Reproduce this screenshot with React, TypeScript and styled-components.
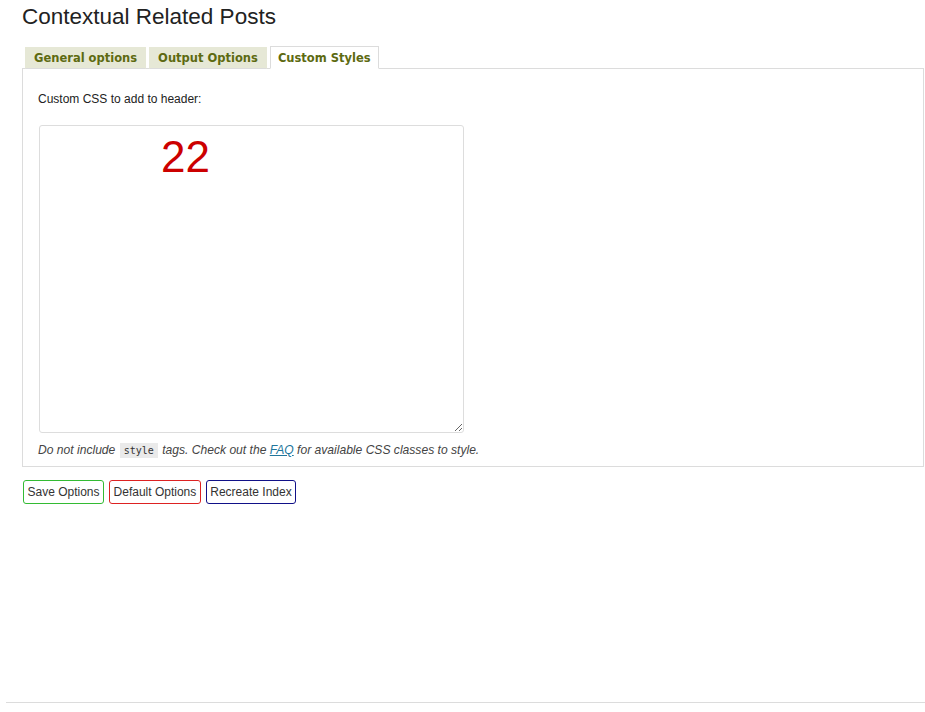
import styled, { createGlobalStyle } from "styled-components"

const GlobalStyle = createGlobalStyle`
    html, body {
        margin: 0;
        padding: 0;
        background: #fff;
    }
    body {
        font-family: "Liberation Sans", Arial, sans-serif;
        font-size: 12px;
        color: #333;
    }
`

const Page = styled.div`
    width: 925px;
    height: 712px;
    display: flex;
    flex-direction: column;
    box-sizing: border-box;
`

const Wrap = styled.div`
    padding: 0 1px 0 22px;
    flex: 1;
`

const Title = styled.h1`
    margin: 0;
    padding: 5px 0 0;
    font-family: "Liberation Sans", Arial, sans-serif;
    font-size: 22.5px;
    font-weight: 400;
    line-height: 24px;
    color: #222;
`

const Tabs = styled.ul`
    list-style: none;
    margin: 18px 0 0 3px;
    padding: 0;
    display: flex;
    gap: 3px;
    position: relative;
    z-index: 1;
`

const Tab = styled.li<{ $active?: boolean }>`
    box-sizing: border-box;
    padding: 0 ${p => (p.$active ? "7px" : "8px")};
    display: flex;
    align-items: center;
    font-family: "DejaVu Sans", Verdana, sans-serif;
    font-weight: 700;
    font-size: 11.5px;
    color: #5d6a11;
    background: ${p => (p.$active ? "#fff" : "#e6e8d6")};
    border: 1px solid ${p => (p.$active ? "#dcdcdc" : "#e6e8d6")};
    border-bottom-color: ${p => (p.$active ? "#fff" : "#dcdcdc")};
    margin-bottom: -1px;
    height: ${p => (p.$active ? "23px" : "22px")};
    margin-top: ${p => (p.$active ? "-1px" : "0")};
`

const Panel = styled.div`
    border: 1px solid #dcdcdc;
    padding: 20px 15px 8px;
    height: 399px;
    box-sizing: border-box;
`

const Label = styled.p`
    margin: 3px 0 0;
    font-size: 12px;
    line-height: 14px;
    color: #222;
`

const FieldBox = styled.div`
    position: relative;
    width: 425px;
    height: 308px;
    margin: 19px 0 0 1px;
`

const CssArea = styled.textarea`
    width: 100%;
    height: 100%;
    box-sizing: border-box;
    border: 1px solid #dddddd;
    border-radius: 3px;
    background: #fff;
    resize: both;
    font-family: "Liberation Mono", monospace;
    font-size: 12px;
    outline: none;
`

const Marker = styled.span`
    position: absolute;
    left: 122px;
    top: 6px;
    font-family: "Liberation Sans", Arial, sans-serif;
    font-size: 44px;
    line-height: 52px;
    color: #cc0000;
    pointer-events: none;
`

const Help = styled.p`
    margin: 8px 0 0;
    font-size: 12.1px;
    line-height: 18px;
    font-style: italic;
    color: #444;
`

const Code = styled.code`
    font-family: "DejaVu Sans Mono", monospace;
    font-size: 10px;
    font-style: normal;
    background: #eaeaea;
    padding: 2px 4px;
    margin: 0 1px;
    color: #333;
`

const FaqLink = styled.a`
    color: #21759b;
    text-decoration: underline;
`

const Buttons = styled.div`
    display: flex;
    gap: 5px;
    margin: 13px 0 0 1px;
`

const Btn = styled.button<{ $tone: string }>`
    height: 24px;
    padding: 0 3.5px;
    font-family: "Liberation Sans", Arial, sans-serif;
    font-size: 12px;
    color: #333;
    background: #fff;
    border: 1px solid ${p => p.$tone};
    border-radius: 3px;
    cursor: pointer;
`

const Footer = styled.div`
    margin: 0 0 9px 6px;
    border-top: 1px solid #dcdcdc;
`

export default function App() {
    return (
        <Page>
            <GlobalStyle />
            <Wrap>
                <Title>Contextual Related Posts</Title>

                <Tabs>
                    <Tab>General options</Tab>
                    <Tab>Output Options</Tab>
                    <Tab $active>Custom Styles</Tab>
                </Tabs>

                <Panel>
                    <Label>Custom CSS to add to header:</Label>
                    <FieldBox>
                        <CssArea defaultValue="" />
                        <Marker>22</Marker>
                    </FieldBox>
                    <Help>
                        Do not include <Code>style</Code> tags. Check out the <FaqLink href="#">FAQ</FaqLink> for available CSS classes to style.
                    </Help>
                </Panel>

                <Buttons>
                    <Btn $tone="#33bb33">Save Options</Btn>
                    <Btn $tone="#dd2222">Default Options</Btn>
                    <Btn $tone="#111188">Recreate Index</Btn>
                </Buttons>
            </Wrap>
            <Footer />
        </Page>
    )
}
